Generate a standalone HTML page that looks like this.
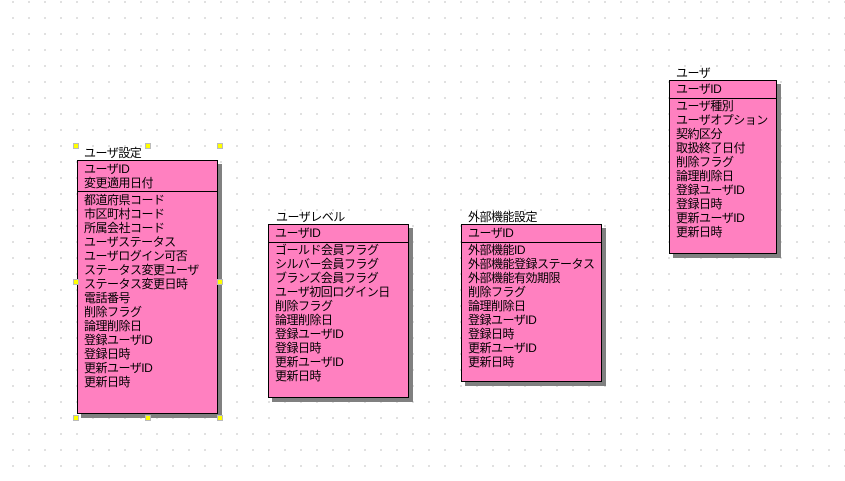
<!DOCTYPE html>
<html><head><meta charset="utf-8"><style>
body{margin:0;width:845px;height:481px;overflow:hidden;background-color:#fff;
background-image:radial-gradient(circle,#999 0.7px,transparent 0.8px);
background-size:16px 16px;background-position:5px -6px;
font-family:"Liberation Sans","Noto Sans CJK JP",sans-serif;font-size:12px;letter-spacing:-0.5px;color:#000;position:relative}
.t{position:absolute;line-height:14px;white-space:nowrap}
.box{position:absolute;background:#ff80c0;border:1px solid #000;box-sizing:border-box;box-shadow:4px 4px 0 #808080}
.sep{position:absolute;left:0;right:0;height:1px;background:#000}
.rows{position:absolute;left:6px;line-height:14px;white-space:nowrap}
.h{position:absolute;width:4px;height:4px;background:#ff0;border:1px solid #bbb}
</style></head><body>

<div class="t" style="left:84px;top:146px">ユーザ設定</div>
<div class="box" style="left:77px;top:160px;width:141px;height:254px">
<div class="rows" style="top:1px">ユーザID<br>変更適用日付</div>
<div class="sep" style="top:30px"></div>
<div class="rows" style="top:32px">都道府県コード<br>市区町村コード<br>所属会社コード<br>ユーザステータス<br>ユーザログイン可否<br>ステータス変更ユーザ<br>ステータス変更日時<br>電話番号<br>削除フラグ<br>論理削除日<br>登録ユーザID<br>登録日時<br>更新ユーザID<br>更新日時</div>
</div>
<div class="h" style="left:73px;top:143px"></div>
<div class="h" style="left:145px;top:143px"></div>
<div class="h" style="left:217px;top:143px"></div>
<div class="h" style="left:73px;top:279px"></div>
<div class="h" style="left:217px;top:279px"></div>
<div class="h" style="left:73px;top:415px"></div>
<div class="h" style="left:145px;top:415px"></div>
<div class="h" style="left:217px;top:415px"></div>

<div class="t" style="left:276px;top:210px">ユーザレベル</div>
<div class="box" style="left:268px;top:224px;width:141px;height:174px">
<div class="rows" style="top:1px">ユーザID</div>
<div class="sep" style="top:17px"></div>
<div class="rows" style="top:18px">ゴールド会員フラグ<br>シルバー会員フラグ<br>ブランズ会員フラグ<br>ユーザ初回ログイン日<br>削除フラグ<br>論理削除日<br>登録ユーザID<br>登録日時<br>更新ユーザID<br>更新日時</div>
</div>

<div class="t" style="left:468px;top:210px">外部機能設定</div>
<div class="box" style="left:461px;top:224px;width:141px;height:158px">
<div class="rows" style="top:1px">ユーザID</div>
<div class="sep" style="top:17px"></div>
<div class="rows" style="top:18px">外部機能ID<br>外部機能登録ステータス<br>外部機能有効期限<br>削除フラグ<br>論理削除日<br>登録ユーザID<br>登録日時<br>更新ユーザID<br>更新日時</div>
</div>

<div class="t" style="left:676px;top:66px">ユーザ</div>
<div class="box" style="left:669px;top:80px;width:108px;height:174px">
<div class="rows" style="top:1px">ユーザID</div>
<div class="sep" style="top:17px"></div>
<div class="rows" style="top:18px">ユーザ種別<br>ユーザオプション<br>契約区分<br>取扱終了日付<br>削除フラグ<br>論理削除日<br>登録ユーザID<br>登録日時<br>更新ユーザID<br>更新日時</div>
</div>
</body></html>
